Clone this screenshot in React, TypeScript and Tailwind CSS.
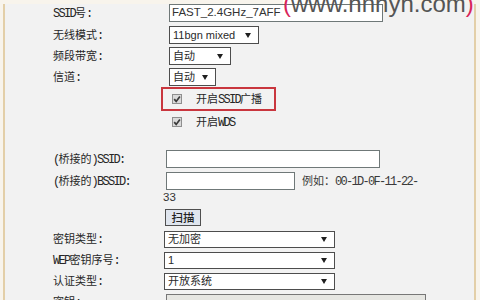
import React from 'react';

const cjk = "font-['Noto_Sans_CJK_SC',sans-serif]";

// latin runs get a narrow mono face, like the SimSun half-width glyphs
const Mixed: React.FC<{ t: string }> = ({ t }) => (
  <>
    {t
      .split(/([\x20-\x7e]+)/)
      .filter(Boolean)
      .map((s, i) =>
        /^[\x20-\x7e]+$/.test(s) ? (
          <span key={i} className="font-['Liberation_Mono',monospace] text-[12px] tracking-[-1.7px]">
            {s}
          </span>
        ) : (
          <span key={i}>{s}</span>
        )
      )}
  </>
);

const Arrow = () => (
  <svg width="6" height="5" viewBox="0 0 6 5" className="shrink-0">
    <path d="M0 0 H6 L3 5 Z" fill="#1f1f1f" />
  </svg>
);

const Check = () => (
  <svg width="10" height="10" viewBox="0 0 10 10" className="shrink-0">
    <rect x="0.5" y="0.5" width="9" height="9" fill="#dadada" stroke="#8f8f8f" />
    <path d="M2.2 5.1 L4.2 7.4 L7.9 2.5" stroke="#3a3a3a" strokeWidth="1.7" fill="none" />
  </svg>
);

const Select: React.FC<{ value: string; className: string }> = ({ value, className }) => (
  <div
    className={`flex h-full items-center justify-between border border-[#4d4d4d] bg-white pl-[3px] pr-[7px] text-[11px] leading-none text-[#2a2a2a] font-['Liberation_Sans','Noto_Sans_CJK_SC',sans-serif] ${className}`}
  >
    <span>{value}</span>
    <Arrow />
  </div>
);

const Input: React.FC<{ value?: string; className: string }> = ({ value, className }) => (
  <div
    className={`flex h-full items-center border border-[#6f7878] bg-white pl-[2px] text-[11.5px] leading-none text-[#333] font-['Liberation_Sans',sans-serif] ${className}`}
  >
    {value}
  </div>
);

const Row: React.FC<{ label: string; lw: string; className: string; children: React.ReactNode }> = ({
  label,
  lw,
  className,
  children,
}) => (
  <div className={`flex items-center ${className}`}>
    <div className={`shrink-0 text-[11px] leading-none text-[#262626] ${cjk} ${lw}`}>
      <Mixed t={label} />
    </div>
    {children}
  </div>
);

export default function App() {
  return (
    <div className="relative h-[300px] w-[480px] overflow-hidden bg-[#f8f4ec]">
      <div className="ml-[3px] h-full w-[473px] border-x-2 border-[#e3cfa8] bg-[#f2f2f2] pl-[48px]">
        {/* wireless basics */}
        <Row label="SSID号:" lw="w-[116px]" className="mt-[4px] h-[18px]">
          <Input value="FAST_2.4GHz_7AFF" className="w-[214px]" />
        </Row>
        <Row label="无线模式:" lw="w-[116px]" className="mt-[4px] h-[18px]">
          <Select value="11bgn mixed" className="w-[90px]" />
        </Row>
        <Row label="频段带宽:" lw="w-[116px]" className="mt-[3px] h-[18px]">
          <Select value="自动" className="w-[62px]" />
        </Row>
        <Row label="信道:" lw="w-[116px]" className="mt-[3px] h-[18px]">
          <Select value="自动" className="w-[47px]" />
        </Row>

        <div className="ml-[108px] mt-[1px] flex h-[24px] w-[115px] items-center border-2 border-[#c9363e] pl-[9px]">
          <Check />
          <span className={`ml-[14px] text-[11px] leading-none text-[#262626] ${cjk}`}>
            <Mixed t="开启SSID广播" />
          </span>
        </div>
        <div className="ml-[119px] mt-[4px] flex h-[14px] items-center">
          <Check />
          <span className={`ml-[14px] text-[11px] leading-none text-[#262626] ${cjk}`}>
            <Mixed t="开启WDS" />
          </span>
        </div>

        {/* bridge */}
        <Row label="(桥接的)SSID:" lw="w-[113px]" className="mt-[21px] h-[18px]">
          <Input className="w-[214px]" />
        </Row>
        <Row label="(桥接的)BSSID:" lw="w-[113px]" className="mt-[4px] h-[18px]">
          <Input className="w-[129px]" />
          <span className={`ml-[7px] text-[11px] leading-none text-[#3a3a3a] ${cjk}`}>
            例如：<Mixed t="00-1D-0F-11-22-" />
          </span>
        </Row>
        <div className="ml-[110px] mt-[1px] h-[12px] text-[11.5px] leading-[12px] text-[#333] font-['Liberation_Sans',sans-serif]">
          33
        </div>
        <div className="ml-[112px] mt-[6px] flex h-[17px] w-[36px] items-center justify-center border border-[#4f4f4f] bg-[#dfe5ee]">
          <span className={`text-[11.5px] font-medium leading-none text-[#222] ${cjk}`}>扫描</span>
        </div>

        {/* security */}
        <Row label="密钥类型:" lw="w-[111px]" className="mt-[5px] h-[17px]">
          <Select value="无加密" className="w-[171px]" />
        </Row>
        <Row label="WEP密钥序号:" lw="w-[111px]" className="mt-[4px] h-[17px]">
          <Select value="1" className="w-[171px]" />
        </Row>
        <Row label="认证类型:" lw="w-[111px]" className="mt-[4px] h-[17px]">
          <Select value="开放系统" className="w-[171px]" />
        </Row>
        <Row label="密钥:" lw="w-[113px]" className="mt-[4px] h-[17px]">
          <div className="h-full w-[260px] border border-[#777] bg-[#e6e6e2]" />
        </Row>
      </div>

      {/* watermark */}
      <div className="absolute left-[283px] top-0 h-[4px] w-[100px] bg-white" />
      <div className="absolute left-[283px] top-[-8px] whitespace-nowrap text-[24px] leading-none text-[#555] font-['Liberation_Sans',sans-serif]">
        <span className="text-[#d8245a]">(</span>www.hnhyh.com<span className="text-[#d8245a]">)</span>
      </div>
    </div>
  );
}
